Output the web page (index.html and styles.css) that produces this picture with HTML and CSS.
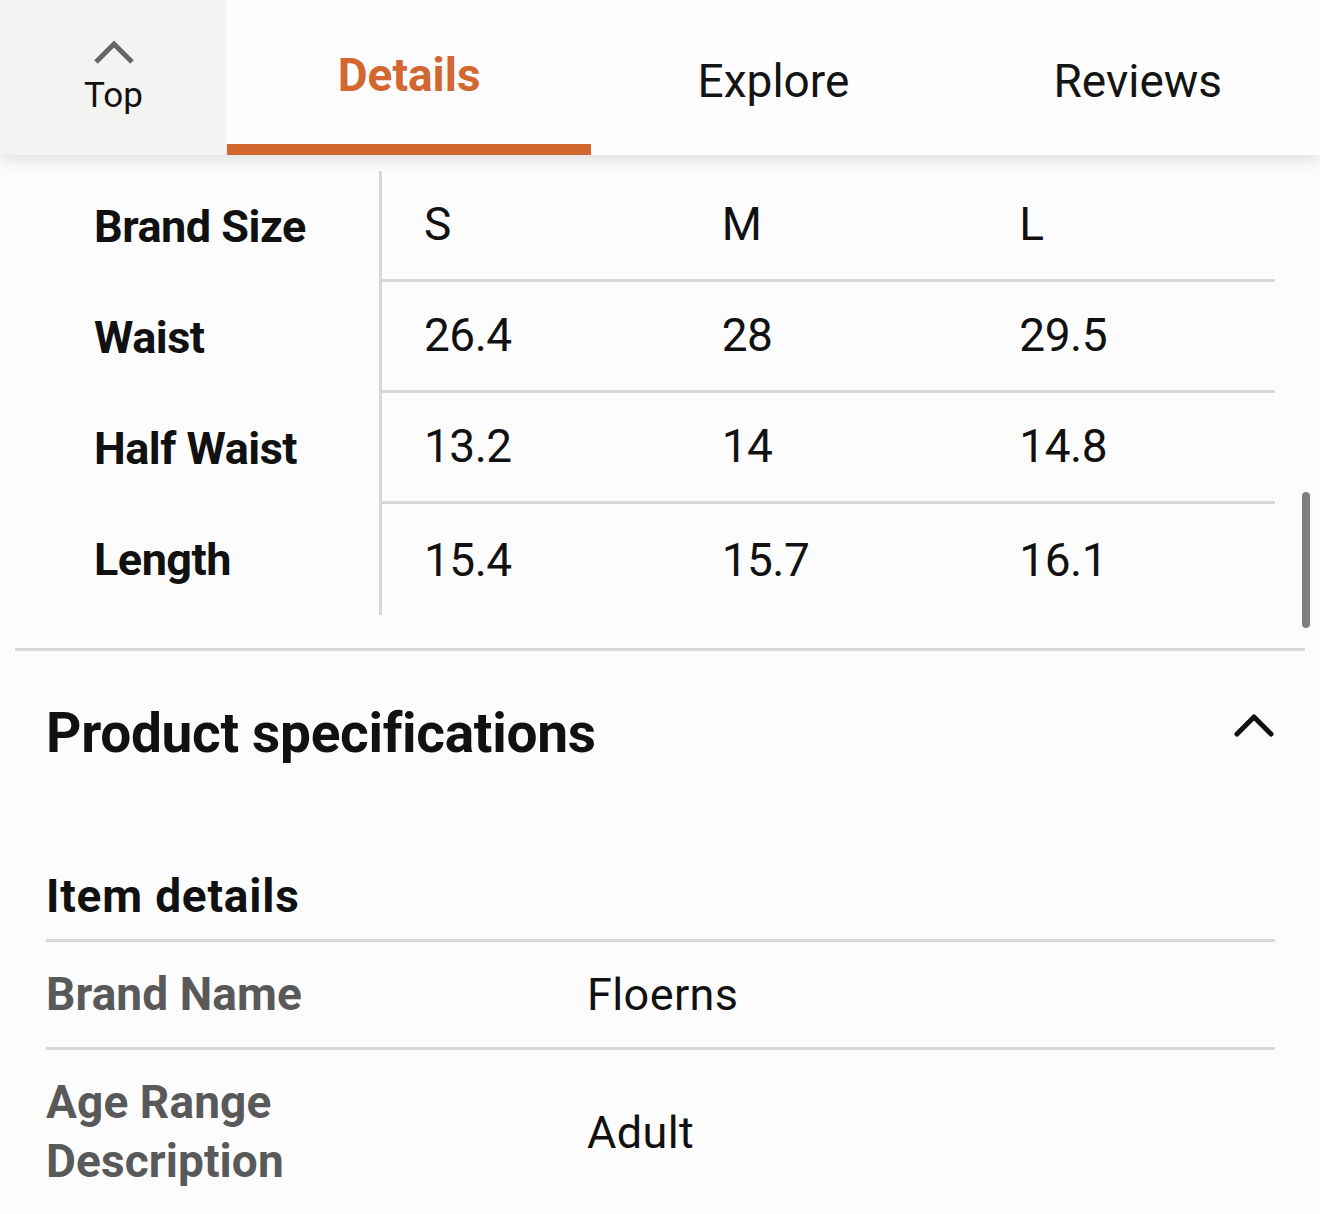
FILE: index.html
```html
<!DOCTYPE html>
<html lang="en">
<head>
  <meta charset="UTF-8">
  <meta name="viewport" content="width=device-width, initial-scale=1.0">
  <title>Product details</title>
  <link rel="stylesheet" href="styles.css">
</head>
<body>
  <nav class="tab-bar">
    <a class="tab-top" href="#">
      <svg class="top-chevron" width="44" height="26" viewBox="0 0 44 26">
        <polyline points="4,23 22,5 40,23" fill="none" stroke="#666" stroke-width="5"/>
      </svg>
      <span>Top</span>
    </a>
    <a class="tab active" href="#">Details</a>
    <a class="tab" href="#">Explore</a>
    <a class="tab" href="#">Reviews</a>
  </nav>

  <!-- Size chart -->
  <div class="size-table">
    <div class="label">Brand Size</div>
    <div class="cell">S</div>
    <div class="cell">M</div>
    <div class="cell">L</div>

    <div class="label">Waist</div>
    <div class="cell">26.4</div>
    <div class="cell">28</div>
    <div class="cell">29.5</div>

    <div class="label">Half Waist</div>
    <div class="cell">13.2</div>
    <div class="cell">14</div>
    <div class="cell">14.8</div>

    <div class="label">Length</div>
    <div class="cell last">15.4</div>
    <div class="cell last">15.7</div>
    <div class="cell last">16.1</div>
  </div>

  <hr class="section-rule">

  <!-- Product specifications -->
  <section class="specs">
    <div class="specs-header">
      <h2 class="specs-title">Product specifications</h2>
      <svg class="specs-chevron" width="42" height="28" viewBox="0 0 42 28">
        <polyline points="4,24 21,7 38,24" fill="none" stroke="#111" stroke-width="5" stroke-linejoin="round" stroke-linecap="round"/>
      </svg>
    </div>

    <h3 class="specs-subtitle">Item details</h3>
    <div class="spec-row">
      <div class="spec-name">Brand Name</div>
      <div class="spec-value">Floerns</div>
    </div>
    <div class="spec-row">
      <div class="spec-name">Age Range<br>Description</div>
      <div class="spec-value">Adult</div>
    </div>
  </section>

  <div class="scroll-thumb"></div>
</body>
</html>
```

FILE: styles.css
```css
* {
  margin: 0;
  padding: 0;
  box-sizing: border-box;
}

body {
  background-color: #fcfcfd;
  font-family: 'Roboto', 'Liberation Sans', sans-serif;
  color: #111;
  width: 1320px;
  min-height: 1214px;
  overflow: hidden;
  position: relative;
}

a {
  color: inherit;
  text-decoration: none;
}

/* Tab bar */
.tab-bar {
  display: flex;
  height: 155px;
  background-color: #fdfdfd;
  box-shadow: 0 6px 14px rgba(0, 0, 0, 0.10);
  position: relative;
  z-index: 1;
}

.tab-top {
  width: 227px;
  background-color: #f3f4f2;
  display: flex;
  flex-direction: column;
  align-items: center;
  justify-content: center;
  gap: 10px;
  font-size: 35px;
  color: #111;
}

.tab {
  flex: 1;
  display: flex;
  align-items: center;
  justify-content: center;
  padding-top: 6px;
  font-size: 46px;
  color: #141414;
}

.tab.active {
  color: #d2672f;
  font-weight: 700;
  border-bottom: 11px solid #d2672f;
}

/* Size chart */
.size-table {
  display: grid;
  grid-template-columns: 382px repeat(3, 1fr);
  margin: 16px 45px 0 0;
  font-size: 45px;
}

.size-table .label {
  height: 111px;
  display: flex;
  align-items: center;
  padding-left: 94px;
  font-weight: 700;
  border-right: 3px solid #d7d7da;
  letter-spacing: -0.5px;
}

.size-table .cell {
  height: 111px;
  display: flex;
  align-items: center;
  padding: 0 0 3px 42px;
  border-bottom: 3px solid #d7d7da;
  font-size: 46px;
  letter-spacing: -0.5px;
}

.size-table .cell.last {
  border-bottom: none;
  padding-bottom: 0;
}

.section-rule {
  border: none;
  height: 3px;
  background-color: #d7d7da;
  margin: 33px 15px 0 15px;
}

/* Product specifications */
.specs {
  padding: 0 45px 0 46px;
}

.specs-header {
  display: flex;
  justify-content: space-between;
  align-items: flex-start;
  margin-top: 50px;
}

.specs-title {
  font-size: 55px;
  font-weight: 700;
  letter-spacing: -0.3px;
}

.specs-chevron {
  margin-top: 9px;
}

.specs-subtitle {
  font-size: 46px;
  font-weight: 700;
  margin-top: 104px;
  padding-bottom: 16px;
  border-bottom: 3px solid #d7d7da;
  letter-spacing: 0.8px;
}

.spec-row {
  display: grid;
  grid-template-columns: 541px 1fr;
  align-items: center;
  padding: 23px 0;
  font-size: 45px;
  line-height: 59px;
  border-bottom: 3px solid #d7d7da;
}

.spec-row:last-child {
  border-bottom: none;
}

.spec-name {
  color: #595959;
  font-size: 46px;
  font-weight: 700;
  letter-spacing: 0.1px;
}

.spec-value {
  color: #111;
  letter-spacing: 0.4px;
}

/* Scrollbar thumb over the page */
.scroll-thumb {
  position: absolute;
  left: 1302px;
  top: 492px;
  width: 8px;
  height: 136px;
  border-radius: 4px;
  background-color: #808080;
}
```
